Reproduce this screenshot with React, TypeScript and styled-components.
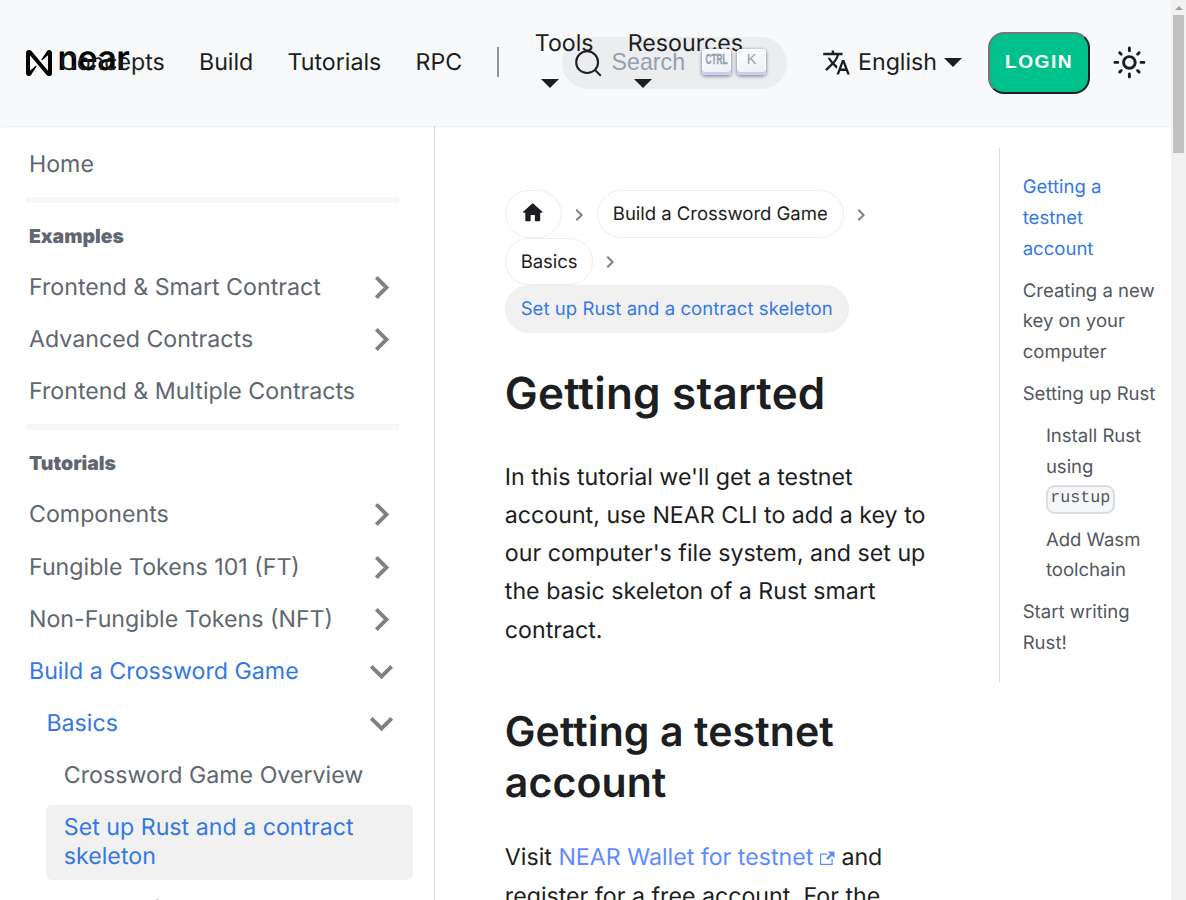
import React from "react";
import styled, { createGlobalStyle, css } from "styled-components";

const GlobalStyle = createGlobalStyle`
  * { box-sizing: border-box; }
  html, body { margin: 0; height: 900px; overflow: hidden; background: #fff; }
  body {
    font-family: Inter, sans-serif;
    font-size: 23.2px;
    line-height: 1.65;
    color: #1c1e21;
    text-rendering: geometricPrecision;
  }
  p, h1, h2, ul { margin: 0; padding: 0; }
  ul { list-style: none; }
`;

const Window = styled.div`
  display: grid;
  grid-template-columns: 1171px 15px;
  height: 900px;
  overflow: hidden;
`;

const Page = styled.div`
  display: flex;
  flex-direction: column;
  height: 900px;
  overflow: hidden;
`;

/* Navbar */

const Navbar = styled.header`
  display: flex;
  flex: none;
  align-items: center;
  height: 126px;
  padding: 0 23.2px 0 26px;
  background: #f8f9fb;
  box-shadow: 0 1px 2px rgba(0, 0, 0, 0.08);
  z-index: 2;
`;

const NavLeft = styled.nav`
  display: flex;
  align-items: center;
  flex: none;
  width: 536px;
  white-space: nowrap;
`;

const Brand = styled.div`
  display: flex;
  align-items: center;
  flex: none;
  width: 16.6px;
  height: 46px;
  color: #000;
  svg { flex: none; }
`;

const BrandName = styled.span`
  margin: 0 0 8px 5.5px;
  font-size: 34px;
  font-weight: 600;
  line-height: 34px;
  letter-spacing: -0.7px;
`;

const NavItem = styled.a<{ $stacked?: boolean }>`
  flex: none;
  display: flex;
  padding: 0 17.1px 2px;
  ${(p) => p.$stacked && css`
    flex-direction: column;
    align-items: flex-start;
  `}
`;

const NavDivider = styled.span`
  flex: none;
  width: 2px;
  height: 30px;
  margin: 0 18.4px 2px 18px;
  background: #909296;
`;

const Caret = styled.span<{ $wrapped?: boolean }>`
  width: 0;
  height: 0;
  border: 9.28px solid transparent;
  border-top-color: currentColor;
  border-bottom-width: 0;
  ${(p) => (p.$wrapped ? "margin: 17.5px 0 12px 6px;" : "margin: 1px 0 0 7px;")}
`;

const NavRight = styled.div`
  display: flex;
  align-items: center;
  flex: none;
  position: relative;
`;

const Search = styled.button`
  display: flex;
  align-items: center;
  width: 225px;
  height: 52px;
  padding: 0 11.6px;
  border: 0;
  border-radius: 40px;
  background: rgba(28, 30, 33, 0.055);
  color: #1c1e21;
  font: 23.2px/28px "Liberation Sans", sans-serif;
`;

const SearchLabel = styled.span`
  margin: 0 0 2px 9px;
  color: #969faf;
`;

const Key = styled.kbd<{ $first?: boolean }>`
  display: flex;
  align-items: center;
  justify-content: center;
  width: 29px;
  height: 26px;
  margin: 0 0 3px ${(p) => (p.$first ? 17 : 6)}px;
  padding-bottom: 5px;
  border-radius: 4px;
  background: linear-gradient(-26.5deg, #eceef2, #fcfdfe);
  box-shadow: inset 0 -3px 0 0 #cdcde6, inset 0 0 1px 1px #fff, 0 1px 3px 1px rgba(30, 35, 90, 0.4);
  color: #969faf;
  font: 14.5px/20px "Liberation Sans", sans-serif;
`;

const Language = styled.a`
  display: flex;
  align-items: center;
  margin-left: 35px;
  padding-bottom: 2px;
  svg { margin-right: 7px; }
`;

const Login = styled.button`
  width: 102px;
  height: 62px;
  margin-left: 26px;
  padding: 0 0 2px;
  border: 2px solid;
  border-color: #767676 #1c1e21 #1c1e21 #767676;
  border-radius: 16px;
  background: #00c08b;
  color: #fff;
  font: bold 19.2px/24px "Liberation Sans", sans-serif;
  letter-spacing: 1.5px;
`;

const ThemeToggle = styled.span`
  display: flex;
  margin-left: 22px;
  padding-bottom: 2px;
`;

/* Sidebar */

const Body = styled.div`
  display: flex;
  flex: none;
  height: 774px;
`;

const Sidebar = styled.aside`
  flex: none;
  width: 435px;
  height: 774px;
  padding: 15.2px 21px 0 11.6px;
  border-right: 1px solid #dadde1;
  overflow: hidden;
  color: #606770;
  line-height: 29px;
`;

const MenuItem = styled.li<{ $level?: number; $active?: boolean; $current?: boolean }>`
  display: flex;
  align-items: center;
  justify-content: space-between;
  margin-left: ${(p) => (p.$level ?? 0) * 17.4}px;
  padding: 8.7px 17.4px;
  border-radius: 6px;
  color: ${(p) => (p.$active ? "#3578e5" : "inherit")};
  background: ${(p) => (p.$current ? "#f1f1f2" : "transparent")};
  & + & { margin-top: 5.8px; }
`;

const MenuRule = styled.li`
  height: 6px;
  margin: 9.2px 14.2px 0 14.4px;
  background: #f7f7f7;
`;

const MenuHeading = styled.li`
  height: 61.5px;
  padding: 19px 17.4px 0;
  font-size: 19.4px;
  font-weight: 900;
`;

const MenuCaret = styled.svg<{ $open?: boolean }>`
  flex: none;
  width: 29px;
  height: 29px;
  overflow: visible;
  transform: rotate(${(p) => (p.$open ? 180 : 90)}deg);
`;

/* Content */

const Article = styled.main`
  flex: none;
  width: 564px;
  padding: 64px 70px 0 69.8px;
  overflow: hidden;
`;

const Breadcrumbs = styled.ul`
  display: flex;
  flex-wrap: wrap;
  font-size: 18.56px;
  line-height: 30.6px;
`;

const Crumb = styled.li`
  display: flex;
  align-items: center;
`;

const CrumbPill = styled.a<{ $active?: boolean }>`
  display: flex;
  align-items: center;
  height: 47.5px;
  padding: 2px 14.85px 0;
  border: 1px solid #eeeeef;
  border-radius: 24px;
  background: ${(p) => (p.$active ? "#f1f1f2" : "transparent")};
  color: ${(p) => (p.$active ? "#3578e5" : "inherit")};
  letter-spacing: ${(p) => (p.$active ? "0.04px" : "-0.04px")};
`;

const HomeIcon = styled.svg`
  width: 25.5px;
  height: 25.5px;
  margin: 0 0.5px 5px -0.5px;
`;

const CrumbArrow = styled.svg`
  width: 24px;
  height: 24px;
  margin: 2px 6px 0 5px;
  transform: rotate(90deg);
`;

const Title = styled.h1`
  margin-top: 33px;
  font-size: 44px;
  font-weight: 600;
  line-height: 55px;
  letter-spacing: 0.2px;
`;

const Subtitle = styled.h2`
  margin-top: 57px;
  font-size: 41px;
  font-weight: 600;
  line-height: 50.75px;
  letter-spacing: 0.1px;
`;

const Paragraph = styled.p<{ $gap: number }>`
  margin-top: ${(p) => p.$gap}px;
  white-space: nowrap;
`;

const Link = styled.a`
  color: #5e8bff;
  svg { margin-left: 7px; }
`;

/* Table of contents */

const Contents = styled.ul`
  flex: none;
  align-self: flex-start;
  width: 172px;
  height: 534px;
  margin-top: 22px;
  padding: 24.4px 0 0 22.7px;
  border-left: 1px solid #dadde1;
  color: #525860;
  font-size: 18.56px;
  line-height: 30.6px;
  white-space: nowrap;
`;

const ContentsItem = styled.li<{ $nested?: boolean; $active?: boolean }>`
  margin-bottom: 11.6px;
  padding-left: ${(p) => (p.$nested ? 23.2 : 0)}px;
  color: ${(p) => (p.$active ? "#3578e5" : "inherit")};
`;

const Code = styled.code`
  padding: 1.7px 2.3px 4px;
  border: 2px solid #dcdddf;
  border-radius: 9px;
  background: #f6f7f8;
  font: 16.7px/20px "Liberation Mono", monospace;
  vertical-align: 2px;
`;

/* Scrollbar */

const ScrollTrack = styled.div`
  display: flex;
  flex-direction: column;
  align-items: center;
  background: #f1f1f1;
`;

const ScrollArrow = styled.span`
  height: 4px;
  margin: 6px 0 5px;
  border: 4px solid transparent;
  border-top-width: 0;
  border-bottom-color: #a3a3a3;
`;

const ScrollThumb = styled.div`
  width: 11px;
  height: 138px;
  background: #c1c1c1;
`;

const CHEVRON = "M7.41 15.41L12 10.83l4.59 4.58L18 14l-6-6-6 6z";

type Entry = { label: React.ReactNode; level?: number; caret?: "open" | "closed"; active?: boolean; current?: boolean };

const examples: Entry[] = [
  { label: "Frontend & Smart Contract", caret: "closed" },
  { label: "Advanced Contracts", caret: "closed" },
  { label: "Frontend & Multiple Contracts" },
];

const tutorials: Entry[] = [
  { label: "Components", caret: "closed" },
  { label: "Fungible Tokens 101 (FT)", caret: "closed" },
  { label: "Non-Fungible Tokens (NFT)", caret: "closed" },
  { label: "Build a Crossword Game", caret: "open", active: true },
  { label: "Basics", level: 1, caret: "open", active: true },
  { label: "Crossword Game Overview", level: 2 },
  { label: <>Set up Rust and a contract<br />skeleton</>, level: 2, active: true, current: true },
  { label: "Add basic code", level: 2 },
];

const MenuEntries = ({ items }: { items: Entry[] }) => (
  <>
    {items.map((item, i) => (
      <MenuItem
        key={i}
        $level={item.current ? 2 : item.level}
        $active={item.active}
        $current={item.current}
      >
        <span>{item.label}</span>
        {item.caret && (
          <MenuCaret viewBox="0 0 24 24" $open={item.caret === "open"}>
            <path d={CHEVRON} fill="#808080" transform="translate(12 12) scale(1.6) translate(-12 -12)" />
          </MenuCaret>
        )}
      </MenuItem>
    ))}
  </>
);

const Separator = () => (
  <CrumbArrow viewBox="0 0 24 24">
    <path d={CHEVRON} fill="#808080" />
  </CrumbArrow>
);

export default function App() {
  return (
    <>
      <GlobalStyle />
      <Window>
        <Page>
          <Navbar>
            <NavLeft>
              <Brand>
                <svg width="26" height="26" viewBox="0 0 90 90">
                  <path d="M72.2 4.6L53.4 32.5c-1.3 1.9 1.2 4.2 3 2.6L74.9 19c.5-.4 1.2-.1 1.2.6v50.3c0 .7-.9 1-1.3.5l-56-67C17 1.2 14.4 0 11.5 0h-2C4.3 0 0 4.3 0 9.6v70.8C0 85.7 4.3 90 9.6 90c3.3 0 6.4-1.7 8.2-4.6l18.8-27.9c1.3-1.9-1.2-4.2-3-2.6l-18.5 16c-.5.4-1.2.1-1.2-.6V20.1c0-.7.9-1 1.3-.5l56 67c1.8 2.2 4.5 3.4 7.3 3.4h2c5.3 0 9.6-4.3 9.6-9.6V9.6C90 4.3 85.7 0 80.4 0c-3.3 0-6.4 1.7-8.2 4.6z" />
                </svg>
                <BrandName>near</BrandName>
              </Brand>
              <NavItem>Concepts</NavItem>
              <NavItem>Build</NavItem>
              <NavItem>Tutorials</NavItem>
              <NavItem>RPC</NavItem>
              <NavDivider />
              <NavItem $stacked>Tools<Caret $wrapped /></NavItem>
              <NavItem $stacked>Resources<Caret $wrapped /></NavItem>
            </NavLeft>
            <NavRight>
              <Search>
                <svg width="29" height="29" viewBox="0 0 20 20" fill="none" stroke="currentColor" strokeWidth="1.4" strokeLinecap="round">
                  <path d="M14.386 14.386l4.0877 4.0877-4.0877-4.0877c-2.9418 2.9419-7.7115 2.9419-10.6533 0-2.9419-2.9418-2.9419-7.7115 0-10.6533 2.9418-2.9419 7.7115-2.9419 10.6533 0 2.9419 2.9418 2.9419 7.7115 0 10.6533z" />
                </svg>
                <SearchLabel>Search</SearchLabel>
                <Key $first>
                  <svg width="23" height="12" viewBox="0 0 23 12">
                    <text x="0.5" y="11.3" textLength="22" lengthAdjust="spacingAndGlyphs" fontFamily="Liberation Sans" fontSize="15" fontWeight="700" fill="#969faf" stroke="#969faf" strokeWidth="0.5">CTRL</text>
                  </svg>
                </Key>
                <Key>K</Key>
              </Search>
              <Language>
                <svg width="29" height="29" viewBox="0 0 24 24" fill="currentColor">
                  <path d="M12.87 15.07l-2.54-2.51.03-.03c1.74-1.94 2.98-4.17 3.71-6.53H17V4h-7V2H8v2H1v1.99h11.17C11.5 7.92 10.44 9.75 9 11.35 8.07 10.32 7.3 9.19 6.69 8h-2c.73 1.63 1.73 3.17 2.98 4.56l-5.09 5.02L4 19l5-5 3.11 3.11.76-2.04zM18.5 10h-2L12 22h2l1.12-3h4.75L21 22h2l-4.5-12zm-2.62 7l1.62-4.33L19.12 17h-3.24z" />
                </svg>
                English
                <Caret />
              </Language>
              <Login>LOGIN</Login>
              <ThemeToggle>
                <svg width="34.8" height="34.8" viewBox="0 0 24 24" fill="currentColor">
                  <path d="M12,9c1.65,0,3,1.35,3,3s-1.35,3-3,3s-3-1.35-3-3S10.35,9,12,9 M12,7c-2.76,0-5,2.24-5,5s2.24,5,5,5s5-2.24,5-5 S14.76,7,12,7L12,7z M2,13l2,0c0.55,0,1-0.45,1-1s-0.45-1-1-1l-2,0c-0.55,0-1,0.45-1,1S1.45,13,2,13z M20,13l2,0c0.55,0,1-0.45,1-1 s-0.45-1-1-1l-2,0c-0.55,0-1,0.45-1,1S19.45,13,20,13z M11,2v2c0,0.55,0.45,1,1,1s1-0.45,1-1V2c0-0.55-0.45-1-1-1S11,1.45,11,2z M11,20v2c0,0.55,0.45,1,1,1s1-0.45,1-1v-2c0-0.55-0.45-1-1-1C11.45,19,11,19.45,11,20z M5.99,4.58c-0.39-0.39-1.03-0.39-1.41,0 c-0.39,0.39-0.39,1.03,0,1.41l1.06,1.06c0.39,0.39,1.03,0.39,1.41,0s0.39-1.03,0-1.41L5.99,4.58z M18.36,16.95 c-0.39-0.39-1.03-0.39-1.41,0c-0.39,0.39-0.39,1.03,0,1.41l1.06,1.06c0.39,0.39,1.03,0.39,1.41,0c0.39-0.39,0.39-1.03,0-1.41 L18.36,16.95z M19.42,5.99c0.39-0.39,0.39-1.03,0-1.41c-0.39-0.39-1.03-0.39-1.41,0l-1.06,1.06c-0.39,0.39-0.39,1.03,0,1.41 s1.03,0.39,1.41,0L19.42,5.99z M7.05,18.36c0.39-0.39,0.39-1.03,0-1.41c-0.39-0.39-1.03-0.39-1.41,0l-1.06,1.06 c-0.39,0.39-0.39,1.03,0,1.41s1.03,0.39,1.41,0L7.05,18.36z" />
                </svg>
              </ThemeToggle>
            </NavRight>
          </Navbar>
          <Body>
            <Sidebar>
              <ul>
                <MenuItem>Home</MenuItem>
                <MenuRule />
                <MenuHeading>Examples</MenuHeading>
                <MenuEntries items={examples} />
                <MenuRule />
                <MenuHeading>Tutorials</MenuHeading>
                <MenuEntries items={tutorials} />
              </ul>
            </Sidebar>
            <Article>
              <Breadcrumbs>
                <Crumb>
                  <CrumbPill>
                    <HomeIcon viewBox="0 0 24 24" fill="currentColor">
                      <path d="M10 19v-5h4v5c0 .55.45 1 1 1h3c.55 0 1-.45 1-1v-7h1.7c.46 0 .68-.57.33-.87L12.67 3.6c-.38-.34-.96-.34-1.34 0l-8.36 7.53c-.34.3-.13.87.33.87H5v7c0 .55.45 1 1 1h3c.55 0 1-.45 1-1z" />
                    </HomeIcon>
                  </CrumbPill>
                  <Separator />
                </Crumb>
                <Crumb>
                  <CrumbPill>Build a Crossword Game</CrumbPill>
                  <Separator />
                </Crumb>
                <Crumb>
                  <CrumbPill>Basics</CrumbPill>
                  <Separator />
                </Crumb>
                <Crumb>
                  <CrumbPill $active>Set up Rust and a contract skeleton</CrumbPill>
                </Crumb>
              </Breadcrumbs>
              <Title>Getting started</Title>
              <Paragraph $gap={37}>
                In this tutorial we'll get a testnet<br />
                account, use NEAR CLI to add a key to<br />
                our computer's file system, and set up<br />
                the basic skeleton of a Rust smart<br />
                contract.
              </Paragraph>
              <Subtitle>Getting a testnet account</Subtitle>
              <Paragraph $gap={31}>
                Visit{" "}
                <Link>
                  NEAR Wallet for testnet
                  <svg width="14.5" height="14.5" viewBox="0 0 24 24" fill="currentColor">
                    <path d="M21 13v10h-21v-19h12v2h-10v15h17v-8h2zm3-12h-10.988l4.035 4-6.977 7.07 2.828 2.828 6.977-7.07 4.125 4.172v-11z" />
                  </svg>
                </Link>{" "}
                and<br />
                register for a free account. For the
              </Paragraph>
            </Article>
            <Contents>
              <ContentsItem $active>Getting a<br />testnet<br />account</ContentsItem>
              <ContentsItem>Creating a new<br />key on your<br />computer</ContentsItem>
              <ContentsItem>Setting up Rust</ContentsItem>
              <ContentsItem $nested>Install Rust<br />using<br /><Code>rustup</Code></ContentsItem>
              <ContentsItem $nested>Add Wasm<br />toolchain</ContentsItem>
              <ContentsItem>Start writing<br />Rust!</ContentsItem>
            </Contents>
          </Body>
        </Page>
        <ScrollTrack>
          <ScrollArrow />
          <ScrollThumb />
        </ScrollTrack>
      </Window>
    </>
  );
}
